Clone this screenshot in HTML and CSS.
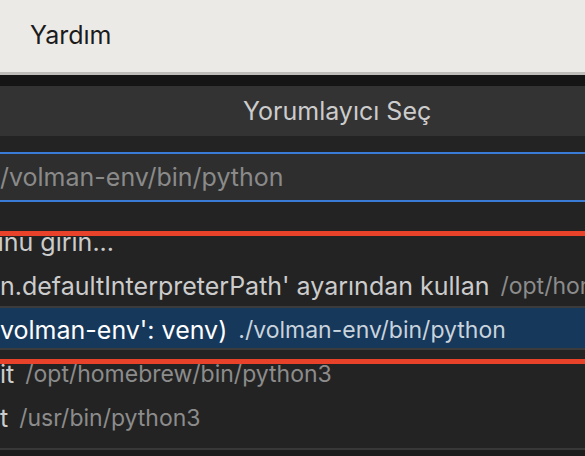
FILE: index.html
```html
<!DOCTYPE html>
<html lang="tr">
<head>
<meta charset="utf-8">
<title>Yorumlayıcı Seç</title>
<link rel="stylesheet" href="styles.css">
</head>
<body>
<div class="menubar"><span class="menu-item">Yardım</span></div>
<div class="strip"></div>
<div class="quickpick">
  <div class="qp-title">Yorumlayıcı Seç</div>
  <div class="qp-input-wrap">
    <div class="qp-input">/volman-env/bin/python</div>
  </div>
  <ul class="qp-list">
    <li class="row"><span class="label cut-enter">unu girin...</span></li>
    <li class="row"><span class="label">n.defaultInterpreterPath' ayarından kullan</span><span class="desc">/opt/homebrew/bin/python3</span></li>
    <li class="row selected"><span class="label">volman-env': venv)</span><span class="desc">./volman-env/bin/python</span></li>
    <li class="row"><span class="label">it</span><span class="desc">/opt/homebrew/bin/python3</span></li>
    <li class="row"><span class="label">t</span><span class="desc">/usr/bin/python3</span></li>
  </ul>
</div>
<div class="annot annot-top"></div>
<div class="annot annot-bottom"></div>
</body>
</html>
```

FILE: styles.css
```css
html, body {
  margin: 0;
  padding: 0;
}
body {
  width: 585px;
  height: 456px;
  overflow: hidden;
  background: #1c1c1c;
  font-family: "Inter", "Noto Sans", "Liberation Sans", sans-serif;
  position: relative;
}
.menubar {
  height: 72px;
  background: #ebeae6;
  border-bottom: 3px solid #bebdb9;
  display: flex;
  align-items: center;
  padding-left: 30px;
}
.menu-item {
  font-size: 25px;
  color: #1b1b1b;
  position: relative;
  top: -1px;
}
.strip {
  height: 11px;
  background: #151515;
}
.quickpick {
  background: #232323;
  border-bottom: 2px solid #383838;
  padding-bottom: 10px;
  overflow: hidden;
}
.qp-title {
  height: 50px;
  background: #333333;
  color: #cccccc;
  font-size: 25px;
  display: flex;
  align-items: center;
  padding-left: 243px;
}
.qp-input-wrap {
  padding-top: 16px;
}
.qp-input {
  height: 46px;
  background: #2e2e2e;
  border-top: 2px solid #3a7bd5;
  border-bottom: 2px solid #3a7bd5;
  color: #8a8a8a;
  font-size: 25px;
  display: flex;
  align-items: center;
  white-space: nowrap;
}
.qp-list {
  list-style: none;
  margin: 16px 0 0 0;
  padding: 0;
}
.row {
  height: 44px;
  padding-top: 3px;
  display: flex;
  align-items: center;
  white-space: nowrap;
  overflow: hidden;
  box-sizing: border-box;
}
.label {
  color: #cccccc;
  font-size: 25px;
  flex: none;
}
.desc {
  color: #8c8c8c;
  font-size: 23px;
  margin-left: 11px;
  flex: none;
}
.selected {
  background: #16385b;
  border-top: 2px solid #3b3b3b;
  border-bottom: 2px solid #3b3b3b;
}
.selected .label {
  color: #ffffff;
}
.selected .desc {
  color: #c9d3dd;
}
.cut-enter {
  margin-left: -11px;
}
.annot {
  position: absolute;
  left: 0;
  right: 0;
  height: 5px;
  background: #e8432a;
}
.annot-top {
  top: 231px;
}
.annot-bottom {
  top: 359px;
}
```
